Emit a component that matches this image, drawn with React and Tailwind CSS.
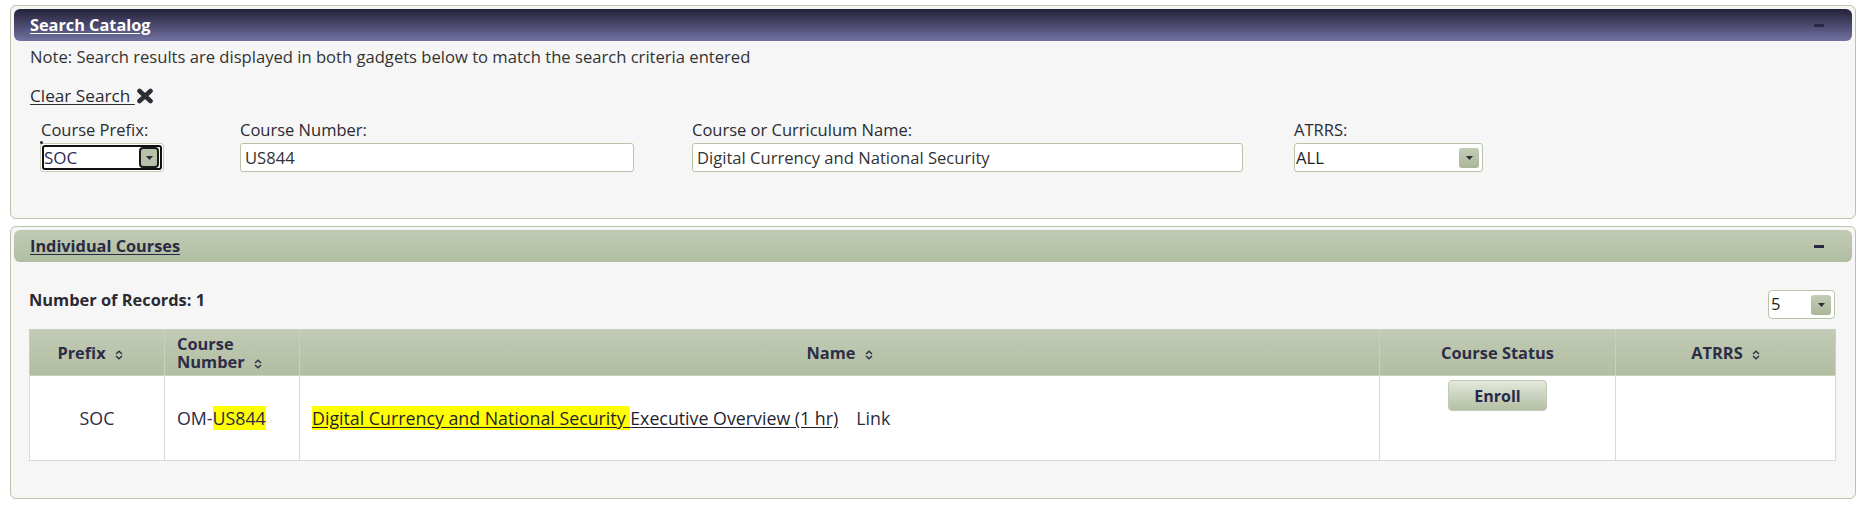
import { useState } from "react";

function SortIcon() {
  return (
    <svg width="8" height="10" viewBox="0 0 8 10" className="inline-block ml-[9px] align-[-1px]">
      <path d="M1 4 L4 1.2 L7 4" fill="none" stroke="#2d2d48" strokeWidth="1.4" />
      <path d="M1 6 L4 8.8 L7 6" fill="none" stroke="#2d2d48" strokeWidth="1.4" />
    </svg>
  );
}

function ArrowBox({ dark }) {
  return (
    <div
      className={
        dark
          ? "w-[20px] h-[21px] rounded-[4px] border-2 border-[#1a1a1a] bg-[#b7c1a9] flex items-center justify-center"
          : "w-[20px] h-[20px] rounded-[3px] bg-gradient-to-b from-[#c3ccb6] to-[#aab69a] flex items-center justify-center"
      }
    >
      <svg width="7" height="4" viewBox="0 0 7 4">
        <path d="M0 0 L7 0 L3.5 4 Z" fill="#2d2d3d" />
      </svg>
    </div>
  );
}

function Panel({ title, dark, height, children }) {
  return (
    <div
      className="border border-[#b9c3aa] rounded-[6px] bg-[#f6f6f6] p-[3px]"
      style={{ height }}
    >
      <div
        className={
          dark
            ? "h-[32px] rounded-[6px] bg-gradient-to-b from-[#24223a] to-[#7373a3] flex items-center justify-between pl-[16px] pr-[28px]"
            : "h-[32px] rounded-[6px] bg-gradient-to-b from-[#c0cab3] to-[#b1bda1] flex items-center justify-between pl-[16px] pr-[28px]"
        }
      >
        <a
          href="#"
          className={
            dark
              ? "text-white font-bold text-[16.3px] underline underline-offset-2"
              : "text-[#2a2a44] font-bold text-[16.3px] underline underline-offset-2"
          }
        >
          {title}
        </a>
        <div className="w-[10px] h-[3px] bg-[#2a2845]"></div>
      </div>
      {children}
    </div>
  );
}

export default function App() {
  const [courseNumber, setCourseNumber] = useState("US844");
  const [courseName, setCourseName] = useState("Digital Currency and National Security");

  return (
    <div className="min-h-screen bg-white pt-[5px] pl-[10px] pr-[5px] font-['Open_Sans',sans-serif] text-[#333]">
      <Panel title="Search Catalog" dark height={214}>
        <div className="pl-[16px]">
          <p className="mt-[6px] text-[16.6px] leading-[20px] text-[#333]">
            Note: Search results are displayed in both gadgets below to match the search criteria entered
          </p>
          <div className="mt-[19px] flex items-center h-[20px]">
            <a href="#" className="text-[17.2px] leading-[20px] text-[#2b2b33] underline underline-offset-2">
              Clear Search&nbsp;
            </a>
            <svg width="18" height="16" viewBox="0 0 18 16" className="ml-[1px]">
              <path d="M3.5 3 L14.5 13 M14.5 3 L3.5 13" stroke="#2e2e35" strokeWidth="4.6" strokeLinecap="round" />
            </svg>
          </div>
          <div className="mt-[14px] grid grid-cols-[200px_452px_602px_189px] pl-[10px] text-[16.5px] leading-[20px] text-[#2b2b33]">
            <div>
              <div className="pl-[1px]">Course Prefix:</div>
              <div className="relative mt-[3px] w-[124px] h-[29px] border border-[#c5ccb8] rounded-[3px] bg-white p-[1px]">
                <div className="absolute -top-[3px] -left-[1px] w-[3px] h-[3px] rounded-full bg-[#222]"></div>
                <div className="h-full border-2 border-[#111] rounded-[3px] flex items-center justify-between pr-[1px]">
                  <span className="text-[17px] text-[#2b2b55]">SOC</span>
                  <ArrowBox dark />
                </div>
              </div>
            </div>
            <div>
              <div>Course Number:</div>
              <input
                className="mt-[3px] w-[394px] h-[29px] border border-[#b9c3aa] rounded-[3px] bg-white px-[4px] text-[16.6px] text-[#333] outline-none"
                value={courseNumber}
                onChange={(e) => setCourseNumber(e.target.value)}
              />
            </div>
            <div>
              <div>Course or Curriculum Name:</div>
              <input
                className="mt-[3px] w-[551px] h-[29px] border border-[#b9c3aa] rounded-[3px] bg-white px-[4px] text-[16.6px] text-[#333] outline-none"
                value={courseName}
                onChange={(e) => setCourseName(e.target.value)}
              />
            </div>
            <div>
              <div>ATRRS:</div>
              <div className="mt-[3px] w-[189px] h-[29px] border border-[#b9c3aa] rounded-[3px] bg-white flex items-center justify-between pl-[1px] pr-[3px]">
                <span className="text-[16.6px] text-[#222]">ALL</span>
                <ArrowBox />
              </div>
            </div>
          </div>
        </div>
      </Panel>

      <div className="mt-[7px]">
        <Panel title="Individual Courses" height={273}>
          <div className="pl-[15px] pr-[17px]">
            <div className="mt-[28px] h-[29px] flex items-start justify-between">
              <span className="text-[16.4px] leading-[20px] font-bold text-[#2a2a33]">Number of Records: 1</span>
              <div className="w-[67px] h-[29px] border border-[#b9c3aa] rounded-[4px] bg-white flex items-center justify-between pl-[2px] pr-[3px]">
                <span className="text-[16.6px] text-[#222]">5</span>
                <ArrowBox />
              </div>
            </div>
            <table className="mt-[10px] w-[1806px] table-fixed border-collapse">
              <colgroup>
                <col className="w-[135px]" />
                <col className="w-[135px]" />
                <col className="w-[1080px]" />
                <col className="w-[236px]" />
                <col className="w-[220px]" />
              </colgroup>
              <thead>
                <tr className="h-[46px] bg-gradient-to-b from-[#c1cbb5] to-[#b1bda1] text-[16.4px] font-bold text-[#2d2d48] leading-[19px]">
                  <th className="border border-[#c9d1bd] text-center font-bold pr-[14px]">
                    Prefix
                    <SortIcon />
                  </th>
                  <th className="border border-[#c9d1bd] text-left pl-[12px] font-bold">
                    <div className="leading-[18px]">Course</div>
                    <div className="leading-[18px]">
                      Number
                      <SortIcon />
                    </div>
                  </th>
                  <th className="border border-[#c9d1bd] text-center font-bold">
                    Name
                    <SortIcon />
                  </th>
                  <th className="border border-[#c9d1bd] text-center font-bold">Course Status</th>
                  <th className="border border-[#c9d1bd] text-center font-bold">
                    ATRRS
                    <SortIcon />
                  </th>
                </tr>
              </thead>
              <tbody>
                <tr className="h-[85px] bg-white text-[17.8px] text-[#2b2b45]">
                  <td className="border border-[#d9d9d9] text-center align-middle">SOC</td>
                  <td className="border border-[#d9d9d9] pl-[12px] align-middle">
                    OM-<span className="bg-[#ffff00]">US844</span>
                  </td>
                  <td className="border border-[#d9d9d9] pl-[12px] align-middle">
                    <a href="#" className="underline underline-offset-2 text-[#1f1f2e]">
                      <span className="bg-[#ffff00]">Digital Currency and National Security </span>
                      Executive Overview (1 hr)
                    </a>
                    <span className="ml-[18px]">Link</span>
                  </td>
                  <td className="border border-[#d9d9d9] align-top text-center pt-[4px]">
                    <button className="w-[99px] h-[31px] rounded-[4px] border border-[#c3cbb6] bg-gradient-to-b from-[#e3e8dc] to-[#b3bfa3] text-[16px] font-bold text-[#2a2a48]">
                      Enroll
                    </button>
                  </td>
                  <td className="border border-[#d9d9d9]"></td>
                </tr>
              </tbody>
            </table>
          </div>
        </Panel>
      </div>
    </div>
  );
}
